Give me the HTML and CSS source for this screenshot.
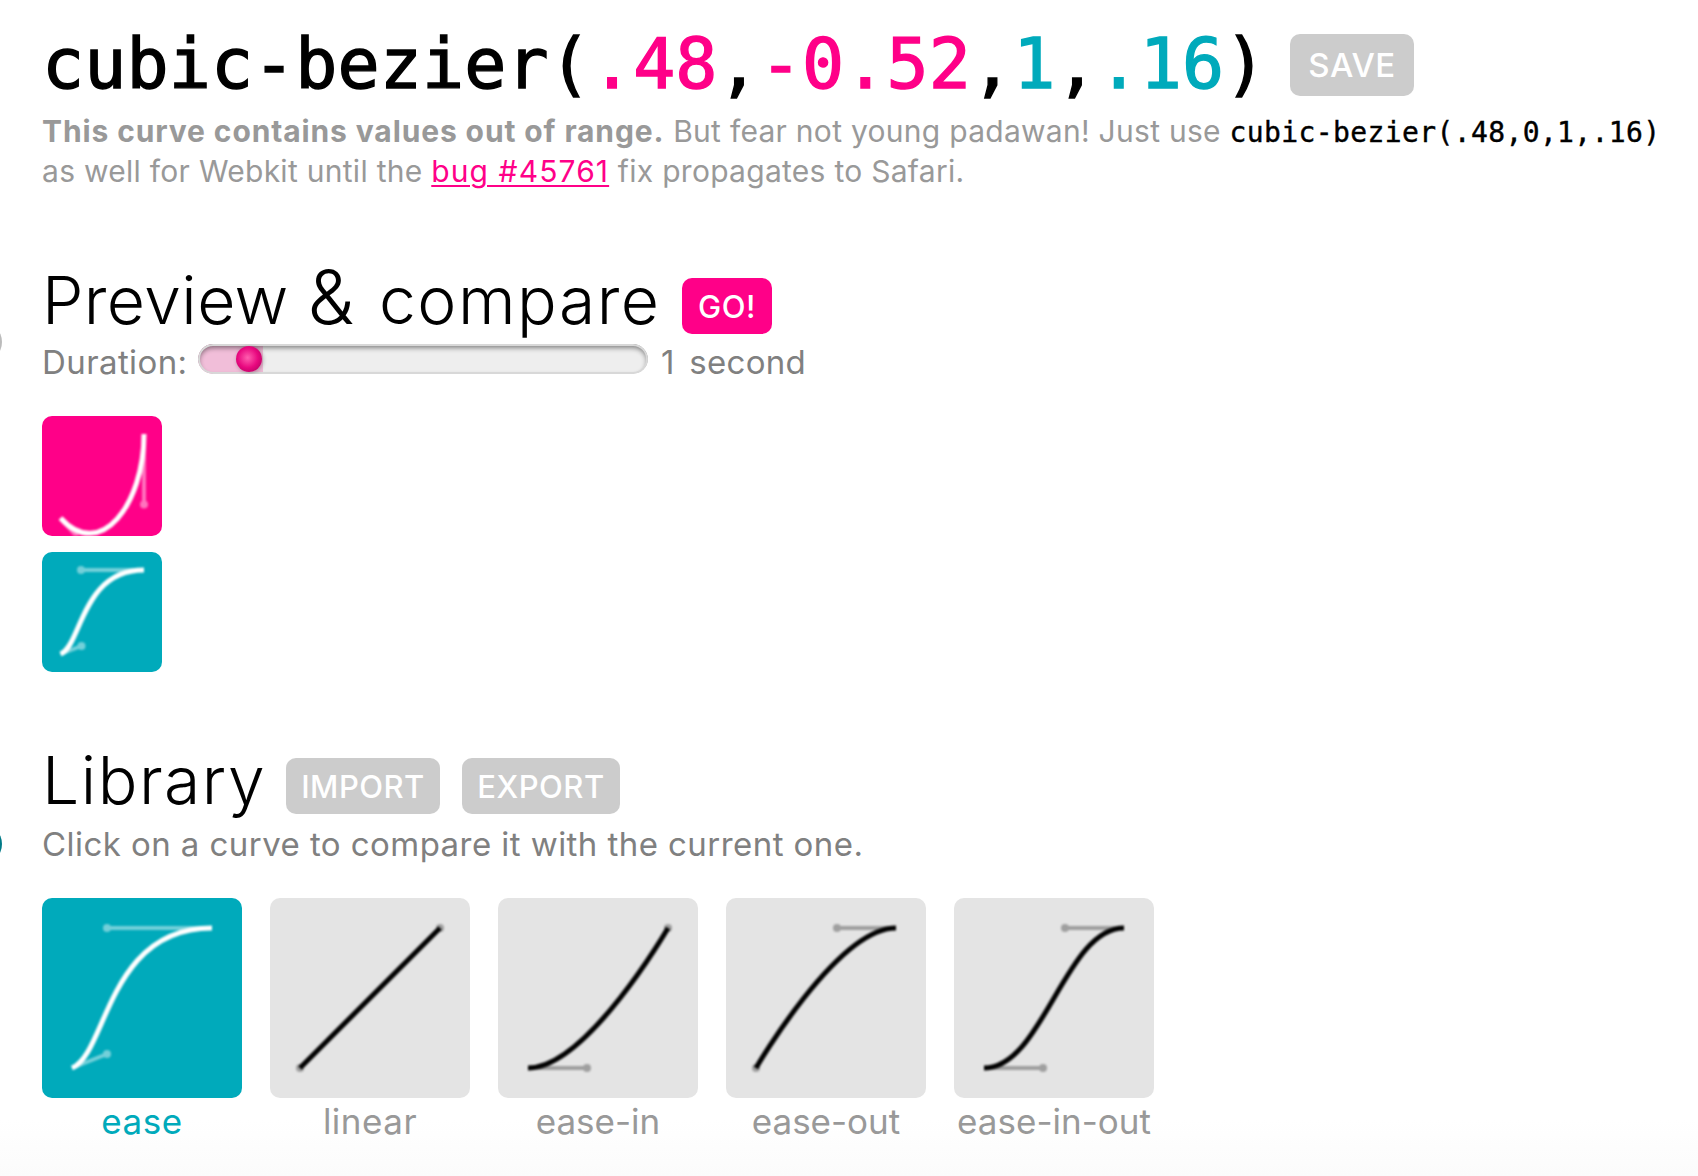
FILE: index.html
```
<!DOCTYPE html>
<html lang="en">
<head>
<meta charset="utf-8">
<title>cubic-bezier</title>
<link rel="stylesheet" href="styles.css">
</head>
<body>
<span class="handle handle-start"></span>
<span class="handle handle-end"></span>
<main class="page">
  <header class="intro">
    <div class="title-row">
      <h1 class="title">cubic-bezier(<span class="p1">.48</span>,<span class="p1">-0.52</span>,<span class="p2">1</span>,<span class="p2">.16</span>)</h1>
      <button class="button save">SAVE</button>
    </div>
    <p class="warning"><span class="warning-line"><strong class="strong">This curve contains values out of range.</strong> <span class="rest">But fear not young padawan! Just use</span> <code class="code">cubic-bezier(.48,0,1,.16)</code></span>
    <span class="warning-line second">as well for Webkit until the <a class="link" href="#bug">bug #45761</a> fix propagates to Safari.</span></p>
  </header>

  <section class="preview">
    <div class="heading-row">
      <h2 class="heading preview-heading"><span class="tight">Preview</span> <span class="amp">&amp;</span> compare</h2>
      <button class="button go">GO!</button>
    </div>
    <div class="duration">
      <span class="duration-label">Duration:</span>
      <div class="slider"><div class="fill"></div><div class="knob"></div></div>
      <span class="duration-value">1 second</span>
    </div>
    <div class="tile small pink">
      <svg class="curve" viewBox="0 0 120 120"><g class="arms"><path d="M18.5 102.5 58.3 146M102 18.500V88.500"/><circle cx="102" cy="88.500" r="4"/></g><path class="line" d="M18.500 102C58.300 146 102 88.300 102 18"/></svg>
    </div>
    <div class="tile small teal">
      <svg class="curve" viewBox="0 0 120 120"><g class="arms"><path d="M18.500 102 39.500 94M102 18H39"/><circle cx="39.500" cy="94" r="4"/><circle cx="39" cy="18" r="4"/></g><path class="line" d="M18.500 102C39.500 93.600 39.500 18 102 18"/></svg>
    </div>
  </section>

  <section class="library">
    <div class="heading-row">
      <h2 class="heading library-heading">Library</h2>
      <button class="button import">IMPORT</button>
      <button class="button export">EXPORT</button>
    </div>
    <p class="hint">Click on a curve to compare it with the current one.</p>
    <div class="curves">
      <figure class="item selected">
        <div class="tile teal"><svg class="curve" viewBox="0 0 200 200"><g class="arms"><path d="M30 170 65 156M170 30H65"/><circle cx="65" cy="156" r="4"/><circle cx="65" cy="30" r="4"/></g><path class="line" d="M30 170C65 156 65 30 170 30"/></svg></div>
        <figcaption class="name spaced">ease</figcaption>
      </figure>
      <figure class="item">
        <div class="tile"><svg class="curve" viewBox="0 0 200 200"><g class="arms"><circle cx="30" cy="170" r="4"/><circle cx="170" cy="30" r="4"/></g><path class="line" d="M30 170 170 30"/></svg></div>
        <figcaption class="name spaced">linear</figcaption>
      </figure>
      <figure class="item">
        <div class="tile"><svg class="curve" viewBox="0 0 200 200"><g class="arms"><path d="M30 170H89"/><circle cx="89" cy="170" r="4"/><circle cx="170" cy="30" r="4"/></g><path class="line" d="M30 170C89 170 170 30 170 30"/></svg></div>
        <figcaption class="name">ease-in</figcaption>
      </figure>
      <figure class="item">
        <div class="tile"><svg class="curve" viewBox="0 0 200 200"><g class="arms"><path d="M170 30H111"/><circle cx="111" cy="30" r="4"/><circle cx="30" cy="170" r="4"/></g><path class="line" d="M30 170C30 170 111 30 170 30"/></svg></div>
        <figcaption class="name">ease-out</figcaption>
      </figure>
      <figure class="item">
        <div class="tile"><svg class="curve" viewBox="0 0 200 200"><g class="arms"><path d="M30 170H89M170 30H111"/><circle cx="89" cy="170" r="4"/><circle cx="111" cy="30" r="4"/></g><path class="line" d="M30 170C89 170 111 30 170 30"/></svg></div>
        <figcaption class="name">ease-in-out</figcaption>
      </figure>
    </div>
  </section>
</main>
</body>
</html>
```
FILE: styles.css
```
* { box-sizing: border-box; margin: 0; padding: 0; }

body {
  width: 1698px;
  height: 1176px;
  overflow: hidden;
  position: relative;
  background: linear-gradient(#fff 0, #fff 1120px, #fbfbfb 1176px);
  font-family: Inter, "Liberation Sans", sans-serif;
  white-space: nowrap;
}

.page { padding: 34px 0 0 42px; }
.title-row, .heading-row { display: flex; align-items: flex-start; }

.title {
  width: 1248px;
  height: 76px;
  font: 400 70px/60px "DejaVu Sans Mono", monospace;
  letter-spacing: 0.08px;
  -webkit-text-stroke: 1.4px currentColor;
}
.p1 { color: #ff0088; }
.p2 { color: #00aabb; }

.button {
  border: 0;
  border-radius: 10px;
  background: #ccc;
  color: #fff;
  font: 500 31px/58px Inter, sans-serif;
  letter-spacing: 0.5px;
  height: 56px;
  text-align: center;
}
.save { width: 124px; height: 62px; line-height: 63px; font-size: 33px; }
.go { width: 90px; background: #ff0088; }
.import { width: 154px; margin-right: 22px; }
.export { width: 158px; }

.warning { height: 168px; padding-top: 1px; color: #999; font-size: 30px; line-height: 40px; letter-spacing: 0.28px; }
.warning-line { display: block; height: 40px; }
.strong { font-weight: 700; letter-spacing: 0.88px; }
.code { color: #000; font: 400 28px/40px "DejaVu Sans Mono", monospace; letter-spacing: 0.38px; -webkit-text-stroke: 0.4px #000; }
.link { color: #ff0088; letter-spacing: 1.1px; text-underline-offset: 3px; text-decoration-thickness: 2px; }

.heading { font-size: 66px; line-height: 44px; font-weight: 300; letter-spacing: 1.5px; }
.tight { letter-spacing: 0.4px; }
.amp { display: inline-block; width: 51px; font-size: 74px; line-height: 1; vertical-align: baseline; margin: -20px 0 -20px -1px; }
.preview-heading { width: 640px; }
.library-heading { width: 244px; }

.duration { display: flex; height: 82px; color: #808080; font-size: 33px; line-height: 56px; letter-spacing: 0.4px; }
.duration-label { width: 156px; }
.duration-value { margin-left: 13px; letter-spacing: 0.3px; word-spacing: 5px; }
.slider {
  position: relative;
  width: 450px;
  height: 30px;
  margin-top: 10px;
  border-radius: 15px;
  overflow: hidden;
  background: #eee;
}
.slider::after {
  content: "";
  position: absolute;
  inset: 0;
  border-radius: 15px;
  box-shadow: inset 0 0 0 2px #d8d8d8, inset 0 3px 5px 1px rgba(0, 0, 0, 0.45);
}
.fill { width: 65px; height: 30px; background: rgba(255, 0, 136, 0.2); }
.knob {
  position: absolute;
  z-index: 1;
  left: 38px;
  top: 2px;
  width: 26px;
  height: 26px;
  border-radius: 50%;
  background: radial-gradient(circle at 45% 45%, #ff5faf 0, #e8087f 50%, #a00055 100%);
  box-shadow: 1px 1px 4px rgba(0, 0, 0, 0.3);
}

.tile { width: 200px; height: 200px; border-radius: 10px; overflow: hidden; background: #e4e4e4; color: #000; }
.small { width: 120px; height: 120px; margin-bottom: 16px; }
.pink { background: #ff0088; color: #fff; }
.teal { background: #00aabb; color: #fff; }
.curve { display: block; width: 100%; height: 100%; filter: blur(0.8px); }
.line { fill: none; stroke: currentColor; stroke-width: 5; }
.arms { opacity: 0.3; fill: currentColor; }
.arms path { stroke: currentColor; stroke-width: 4; fill: none; }
.pink .arms, .teal .arms { opacity: 0.45; }

.library { margin-top: 86px; }
.hint { height: 84px; color: #808080; font-size: 33px; line-height: 60px; letter-spacing: 0.44px; }
.curves { display: flex; gap: 28px; }
.item { width: 200px; }
.name { color: #999; font-size: 35px; line-height: 46px; text-align: center; }
.spaced { letter-spacing: 0.5px; }
.selected .name { color: #00aabb; }

.handle { position: absolute; left: -38px; width: 40px; height: 40px; border-radius: 50%; }
.handle-start { top: 322px; background: #bbb; }
.handle-end { top: 824px; background: #007a87; }
```
